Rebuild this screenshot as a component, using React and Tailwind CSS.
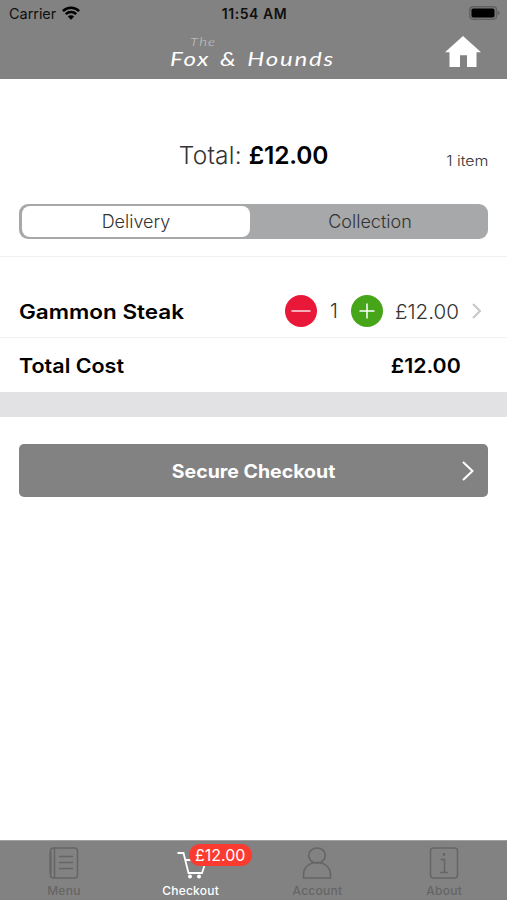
import React from 'react';

const body = 'font-["Inter","Liberation_Sans",sans-serif]';

function StatusBar() {
  return (
    <div className="grid h-[28px] grid-cols-3 items-center pl-[9px] pr-[7px] text-[14px] leading-[28px] text-[#101010]">
      <div className="flex items-center gap-[6px]">
        <span className="text-[14.5px] tracking-[-0.05px]">Carrier</span>
        <svg width="18" height="14" viewBox="0 0 18 14" className="-mt-[2px]" fill="none" stroke="#000" strokeWidth="2.5">
          <path d="M0.9 5.1a11.6 11.6 0 0 1 16.2 0" />
          <path d="M3.8 8.2a7.4 7.4 0 0 1 10.4 0" />
          <path d="M9 13.7 5.8 10.5a4.5 4.5 0 0 1 6.4 0z" fill="#000" stroke="none" />
        </svg>
      </div>
      <span className="whitespace-nowrap text-center text-[14px] font-semibold tracking-[0.55px]">11:54 AM</span>
      <svg width="31" height="14" viewBox="0 0 31 14" className="justify-self-end -mt-[2px]">
        <rect x="0.7" y="0.7" width="27" height="12.6" rx="3.5" fill="#777" stroke="#606060" strokeWidth="1.2" />
        <rect x="2.5" y="2.5" width="23" height="9" rx="1.8" fill="#000" />
        <path d="M28.8 4.7q2 .6 2 2.3t-2 2.3z" fill="#606060" />
      </svg>
    </div>
  );
}

function Header() {
  return (
    <header className="h-[79px] bg-[#828282]">
      <StatusBar />
      <div className="grid h-[51px] grid-cols-[1fr_170px_1fr] items-start">
        <span />
        <div className="flex h-[51px] flex-col items-start pt-[9px] font-['Lato',sans-serif] italic text-white">
          <span className="ml-[21px] h-[10px] origin-left scale-x-[1.25] text-[12px] leading-[10px] tracking-[1px] font-light text-[#c9c9c9]">The</span>
          <span className="ml-[1px] h-[22px] origin-left scale-x-[1.2] whitespace-nowrap text-[20px] leading-[22px] tracking-[1.5px] [word-spacing:2px]">Fox &amp; Hounds</span>
        </div>
        <svg width="36" height="32" viewBox="0 0 36 32" className="mr-[26px] mt-[8px] justify-self-end" fill="#fff">
          <path d="M18 0 36 16.2H31.5V31H22V19.3H15V31H4.5V16.2H0z" />
        </svg>
      </div>
    </header>
  );
}

function Tab({ label, active, children }) {
  return (
    <div className={`relative flex flex-col items-center pl-[1px] ${active ? 'text-white' : 'text-[#656565]'}`}>
      <div className="mt-[6px] h-[36px]">{children}</div>
      <span className="text-[12px] font-medium leading-[16px] tracking-[0.25px]">{label}</span>
    </div>
  );
}

export default function App() {
  return (
    <div className={`flex h-[900px] w-[507px] flex-col overflow-hidden bg-white text-black ${body}`}>
      <Header />
      <section className="h-[178px] border-b border-[#f1f1f1] px-[19px]">
        <div className="grid h-[125px] grid-cols-[1fr_auto_1fr] items-center pt-[27px]">
          <span />
          <div className="whitespace-nowrap text-[24.5px] leading-[30px]">
            <span className="font-light tracking-[0.2px] text-[#333]">Total: </span>
            <span className="font-semibold tracking-[-0.2px]">£12.00</span>
          </div>
          <span className="mt-[12px] origin-right scale-x-[1.1] justify-self-end text-[14.5px] font-light text-[#333]">1 item</span>
        </div>
        <div className="grid h-[35px] grid-cols-2 rounded-[9px] bg-[#a6a8a9] p-[2px] pl-[3px] text-center text-[18px] font-light leading-[32px] text-[#333]">
          <div className="mr-[4px] h-[31px] rounded-[8px] bg-white">Delivery</div>
          <div>Collection</div>
        </div>
      </section>
      <section className="flex h-[81px] items-center border-b border-[#f3f3f3] pl-[19px] pr-[26px] pt-[28px]">
        <span className="origin-left scale-x-[1.125] pt-[1px] text-[20px] font-semibold">Gammon Steak</span>
        <div className="ml-auto flex items-center font-light text-[#333]">
          <svg width="32" height="32" viewBox="0 0 32 32" fill="none" stroke="#fff" strokeWidth="1.3">
            <circle cx="16" cy="16" r="16" fill="#e91838" stroke="none" />
            <path d="M6.5 16h19" />
          </svg>
          <span className="w-[34px] text-center text-[20px]">1</span>
          <svg width="32" height="32" viewBox="0 0 32 32" fill="none" stroke="#fff" strokeWidth="1.5">
            <circle cx="16" cy="16" r="16" fill="#46a518" stroke="none" />
            <path d="M8.5 16h15M16 8.5v15" />
          </svg>
          <span className="ml-[12px] w-[65px] origin-left scale-x-[1.03] pt-[1px] text-[20px]">£12.00</span>
          <svg width="9" height="16" viewBox="0 0 9 16" className="ml-[12px]" fill="none" stroke="#c7c7c9" strokeWidth="2">
            <path d="m1 1 7 7-7 7" />
          </svg>
        </div>
      </section>
      <section className="flex h-[54px] items-center justify-between pl-[19px] pr-[46px] pt-[2px] text-[20px] font-semibold">
        <span className="origin-left scale-x-[1.075]">Total Cost</span>
        <span className="origin-right scale-x-[1.065]">£12.00</span>
      </section>
      <div className="h-[25px] bg-[#e2e2e4]" />
      <div className="px-[19px] pt-[27px]">
        <button className="grid h-[53px] w-full grid-cols-[1fr_auto_1fr] items-center rounded-[5px] bg-[#828282] px-[14px] text-white">
          <span />
          <span className="scale-x-[1.055] pt-[2px] text-[18.5px] font-bold">Secure Checkout</span>
          <svg width="12" height="20" viewBox="0 0 12 20" className="justify-self-end" fill="none" stroke="#fff" strokeWidth="2">
            <path d="m1 1 9.5 9L1 19" />
          </svg>
        </button>
      </div>
      <nav className="mt-auto grid h-[60px] grid-cols-4 border-t border-[#a0a0a0] bg-[#828282]">
        <Tab label="Menu">
          <svg width="30" height="32" viewBox="0 0 30 32" fill="none" stroke="currentColor" strokeWidth="1.5">
            <rect x="1.5" y="1" width="27" height="30" rx="3" />
            <path d="M5.5 1v30M10 9.5h14M10 15.5h14M10 21.5h14" />
            <path d="M1.5 5v22" strokeWidth="2" />
          </svg>
        </Tab>
        <Tab label="Checkout" active>
          <svg width="30" height="32" viewBox="0 0 30 32" fill="none" stroke="currentColor" strokeWidth="1.8">
            <path d="M1.5 6h6l5 20h13.5L30 14M9.3 13H29" />
            <circle cx="14" cy="29.5" r="2" fill="currentColor" stroke="none" />
            <circle cx="23" cy="29.5" r="2" fill="currentColor" stroke="none" />
          </svg>
          <span className="absolute left-[62px] top-[3px] h-[22px] w-[63px] rounded-full bg-[#fb3b30] text-center text-[16px] leading-[22px] text-white">£12.00</span>
        </Tab>
        <Tab label="Account">
          <svg width="30" height="32" viewBox="0 0 30 32" fill="none" stroke="currentColor" strokeWidth="1.6">
            <ellipse cx="15" cy="8.5" rx="8.3" ry="7.5" />
            <path d="M1.5 31V28C1.5 20 7.5 15.5 15 15.5S28.5 20 28.5 28V31Z" />
          </svg>
        </Tab>
        <Tab label="About">
          <svg width="30" height="32" viewBox="0 0 30 32" fill="none" stroke="currentColor" strokeWidth="1.5">
            <rect x="1.5" y="1" width="27" height="30" rx="3" />
            <path d="M11.5 12.5h4v13M11 25.5h8" />
            <circle cx="15" cy="7.5" r="1.4" fill="currentColor" stroke="none" />
          </svg>
        </Tab>
      </nav>
    </div>
  );
}
